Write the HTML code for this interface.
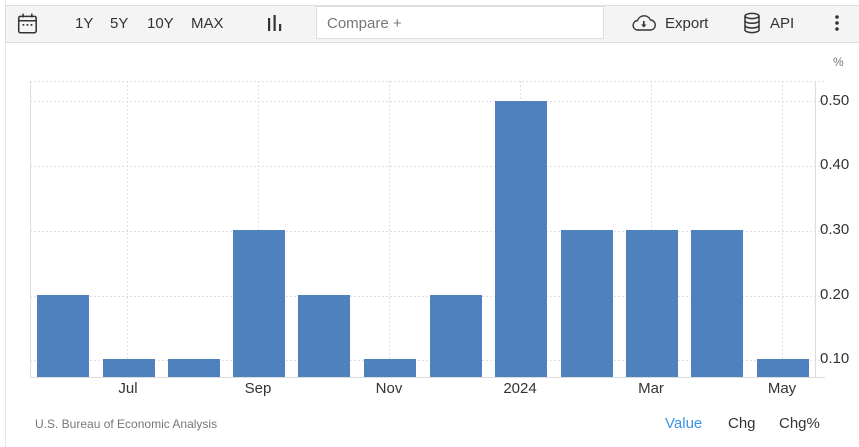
<!DOCTYPE html>
<html><head><meta charset="utf-8"><style>
body{margin:0;width:859px;height:447px;background:#fff;font-family:"Liberation Sans",Arial,sans-serif;overflow:hidden;position:relative}
.page{position:absolute;left:5px;top:0;width:854px;height:447px;border-left:1px solid #e6e6e6}
.tb{position:absolute;left:5px;top:5px;width:854px;height:38px;background:#f4f4f4;border:1px solid #dedede;border-right:none;box-sizing:border-box}
.t{position:absolute;font-size:15px;color:#333;top:15px}
.cmp{position:absolute;left:316px;top:6px;width:288px;height:33px;background:#fff;border:1px solid #e0e0e0;box-sizing:border-box;font-size:15px;color:#777;padding:8px 10px}
svg text{font-family:"Liberation Sans",Arial,sans-serif}
</style></head><body>
<div class="page"></div>
<div class="tb"></div>
<svg style="position:absolute;left:17px;top:12px" width="22" height="24" viewBox="0 0 20 22"><rect x="1.5" y="4" width="16" height="15" rx="1.5" fill="none" stroke="#333" stroke-width="1.4"/><line x1="1.5" y1="8" x2="17.5" y2="8" stroke="#333" stroke-width="1.4"/><line x1="5.5" y1="1.5" x2="5.5" y2="5" stroke="#333" stroke-width="1.4"/><line x1="13.5" y1="1.5" x2="13.5" y2="5" stroke="#333" stroke-width="1.4"/><rect x="5" y="11" width="1.6" height="1.6" fill="#333"/><rect x="8.7" y="11" width="1.6" height="1.6" fill="#333"/><rect x="12.4" y="11" width="1.6" height="1.6" fill="#333"/></svg>
<div class="t" style="left:75px">1Y</div>
<div class="t" style="left:110px">5Y</div>
<div class="t" style="left:147px">10Y</div>
<div class="t" style="left:191px">MAX</div>
<svg style="position:absolute;left:266px;top:14px" width="18" height="18"><rect x="2" y="4" width="2.2" height="13" fill="#333"/><rect x="7.5" y="1" width="2.2" height="16" fill="#333"/><rect x="13" y="10" width="2.2" height="7" fill="#333"/></svg>
<div class="cmp">Compare +</div>
<svg style="position:absolute;left:631px;top:13px" width="26" height="20" viewBox="0 0 26 20"><path d="M6 17 H19 A5 5 0 0 0 19.5 7 A7 7 0 0 0 6.5 7.5 A4.8 4.8 0 0 0 6 17 Z" fill="none" stroke="#333" stroke-width="1.4"/><line x1="12.8" y1="8" x2="12.8" y2="13.5" stroke="#333" stroke-width="1.6"/><path d="M10 11.5 L12.8 14.5 L15.6 11.5 Z" fill="#333"/></svg>
<div class="t" style="left:665px">Export</div>
<svg style="position:absolute;left:743px;top:12px" width="18" height="22" viewBox="0 0 18 22"><ellipse cx="9" cy="4" rx="7" ry="2.6" fill="none" stroke="#333" stroke-width="1.5"/><path d="M2 4 V18 A7 2.6 0 0 0 16 18 V4" fill="none" stroke="#333" stroke-width="1.5"/><path d="M2 8.7 A7 2.6 0 0 0 16 8.7 M2 13.4 A7 2.6 0 0 0 16 13.4" fill="none" stroke="#333" stroke-width="1.5"/></svg>
<div class="t" style="left:770px">API</div>
<svg style="position:absolute;left:834px;top:14px" width="6" height="18"><circle cx="3" cy="3" r="1.8" fill="#333"/><circle cx="3" cy="9" r="1.8" fill="#333"/><circle cx="3" cy="15" r="1.8" fill="#333"/></svg>
<svg style="position:absolute;left:0;top:0" width="859" height="447">
<g stroke="#e0e0e0" stroke-width="1" stroke-dasharray="2,2">
<line x1="30" y1="81.5" x2="825" y2="81.5"/><line x1="30" y1="101.5" x2="825" y2="101.5"/><line x1="30" y1="166.5" x2="825" y2="166.5"/><line x1="30" y1="231.5" x2="825" y2="231.5"/><line x1="30" y1="296.5" x2="825" y2="296.5"/><line x1="30" y1="360.5" x2="825" y2="360.5"/>
<line x1="127.5" y1="81" x2="127.5" y2="377"/><line x1="258.5" y1="81" x2="258.5" y2="377"/><line x1="389.5" y1="81" x2="389.5" y2="377"/><line x1="520.5" y1="81" x2="520.5" y2="377"/><line x1="651.5" y1="81" x2="651.5" y2="377"/><line x1="782.5" y1="81" x2="782.5" y2="377"/>
</g>
<g stroke="#dcdcdc" stroke-width="1"><line x1="30.5" y1="81" x2="30.5" y2="377"/><line x1="815.5" y1="81" x2="815.5" y2="377"/><line x1="30" y1="377.5" x2="825" y2="377.5"/></g>
<g fill="#4e81bd">
<rect x="37" y="295" width="52" height="82"/><rect x="103" y="359" width="52" height="18"/><rect x="168" y="359" width="52" height="18"/><rect x="233" y="230" width="52" height="147"/><rect x="298" y="295" width="52" height="82"/><rect x="364" y="359" width="52" height="18"/><rect x="430" y="295" width="52" height="82"/><rect x="495" y="101" width="52" height="276"/><rect x="561" y="230" width="52" height="147"/><rect x="626" y="230" width="52" height="147"/><rect x="691" y="230" width="52" height="147"/><rect x="757" y="359" width="52" height="18"/>
</g>
<g font-size="15" fill="#333">
<text x="820" y="105">0.50</text><text x="820" y="169">0.40</text><text x="820" y="234">0.30</text><text x="820" y="299">0.20</text><text x="820" y="363">0.10</text>
</g>
<text x="833" y="66" font-size="12" fill="#777">%</text>
<g font-size="15" fill="#333" text-anchor="middle">
<text x="128" y="393">Jul</text><text x="258" y="393">Sep</text><text x="389" y="393">Nov</text><text x="520" y="393">2024</text><text x="651" y="393">Mar</text><text x="782" y="393">May</text>
</g>
<text x="35" y="428" font-size="12" fill="#777">U.S. Bureau of Economic Analysis</text>
<text x="665" y="428" font-size="15" fill="#3b95e8">Value</text>
<text x="728" y="428" font-size="15" fill="#333">Chg</text>
<text x="779" y="428" font-size="15" fill="#333">Chg%</text>
</svg>
</body></html>
